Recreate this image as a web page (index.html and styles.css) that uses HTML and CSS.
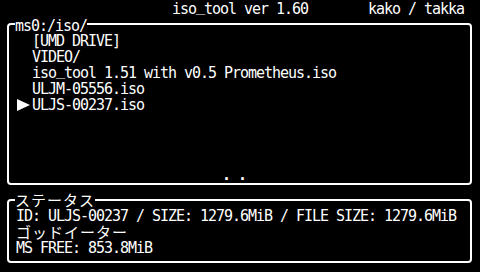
FILE: index.html
```html
<!DOCTYPE html>
<html lang="ja">
<head>
    <meta charset="UTF-8">
    <meta name="viewport" content="width=device-width, initial-scale=1.0">
    <title>iso_tool</title>
    <link rel="stylesheet" href="styles.css">
</head>
<body>
    <div class="header">
        <div></div>
        <div class="title">iso<span class="us">_</span>tool ver 1.60</div>
        <div class="authors">kako / takka</div>
    </div>

    <fieldset class="box">
        <legend class="path">ms0:/iso/</legend>
        <div class="pane">
            <div class="list">
                <div class="row">[UMD DRIVE]</div>
                <div class="row">VIDEO/</div>
                <div class="row">iso<span class="us">_</span>tool 1.51 with v0.5 Prometheus.iso</div>
                <div class="row">ULJM-05556.iso</div>
                <div class="row selected">ULJS-00237.iso</div>
            </div>
            <div class="more">. .</div>
        </div>
    </fieldset>

    <fieldset class="box status-box">
        <legend class="jp">ステータス</legend>
        <div class="status">
            <div class="line">ID: ULJS-00237 / SIZE: 1279.6MiB / FILE SIZE: 1279.6MiB</div>
            <div class="line jp">ゴッドイーター</div>
            <div class="line">MS FREE: 853.8MiB</div>
        </div>
    </fieldset>
</body>
</html>
```

FILE: styles.css
```css
* {
    margin: 0;
    padding: 0;
    box-sizing: border-box;
}

body {
    background-color: #000;
    color: #fff;
    width: 480px;
    height: 272px;
    overflow: hidden;
    font-family: 'DejaVu Sans Mono', 'Liberation Mono', monospace;
    font-size: 15px;
    line-height: 16px;
    letter-spacing: -1.03px;
}

/* underscores sit on the baseline in the psp font */
.us {
    vertical-align: 3px;
    line-height: 0;
}

/* top bar */
.header {
    display: grid;
    grid-template-columns: 1fr auto 1fr;
    height: 14px;
    padding-top: 2px;
    line-height: 14px;
}

.authors {
    justify-self: end;
    padding-right: 16px;
}

/* framed panels */
.box {
    margin: 0 8px 0 7px;
    border: 2px solid #fff;
    border-radius: 4px;
}

.box legend {
    margin-left: 6px;
    padding: 0;
}

.path {
    padding-top: 4px !important;
}

.pane {
    height: 149px;
    display: flex;
    flex-direction: column;
}

.list {
    flex: 1;
    margin-top: -1px;
}

.row {
    position: relative;
    padding-left: 23px;
    white-space: nowrap;
}

/* cursor arrow */
.selected::before {
    content: '';
    position: absolute;
    left: 8px;
    top: 2px;
    width: 0;
    height: 0;
    border-left: 13px solid #fff;
    border-top: 6px solid transparent;
    border-bottom: 6px solid transparent;
}

.more {
    padding-left: 213px;
    font-weight: bold;
}

.status-box {
    margin-top: 7px;
}

.status {
    height: 53px;
    padding-left: 7px;
}

.line {
    white-space: nowrap;
}

.jp {
    font-family: 'Noto Sans CJK JP', sans-serif;
    letter-spacing: 1px;
}
```
